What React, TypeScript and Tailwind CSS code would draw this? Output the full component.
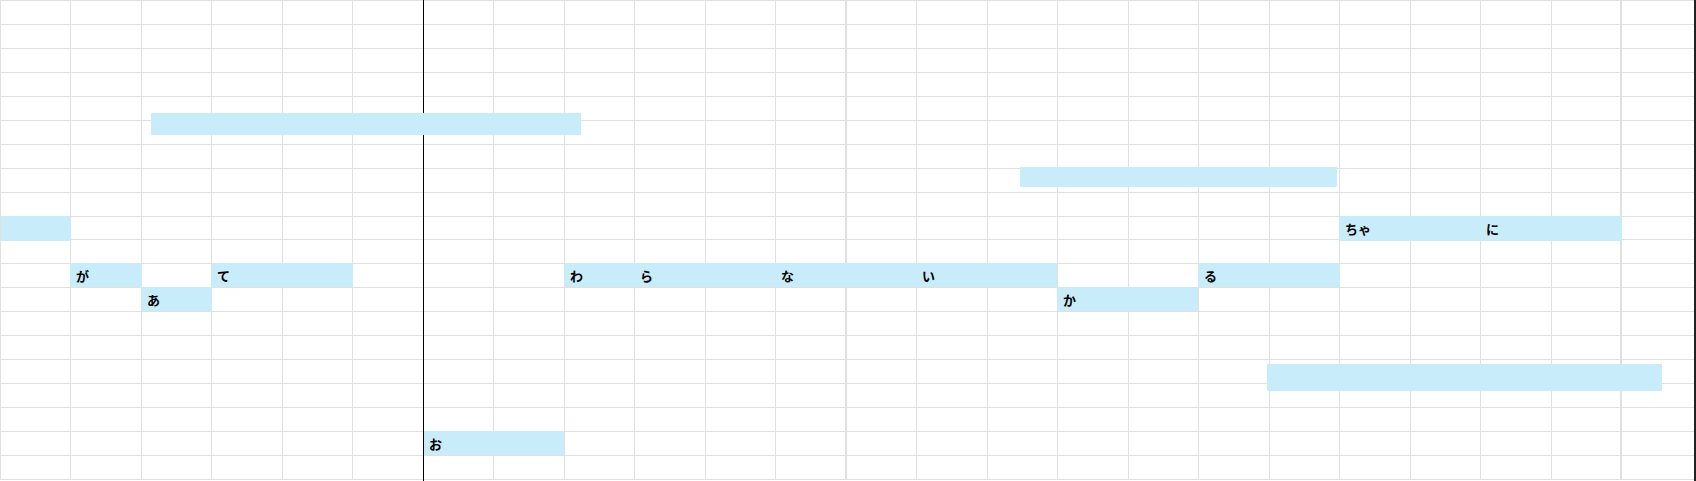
import React from "react";

const colW = (i: number) =>
  i === 23 ? "w-[73px]" : i % 2 === 0 ? "w-[70px]" : "w-[71px]";

const rowCls = (r: number) => {
  if (r === 10) return "h-[23px]";
  if (r === 9) return "h-[24px] border-t border-b";
  if (r === 19) return "h-[25px] border-t border-b";
  return "h-[24px] border-t";
};

type Note = { cls: string; text?: string };

const lyricNotes: Note[] = [
  { cls: "left-[1px] top-[216px] w-[70px] h-[25px]" },
  { cls: "left-[70px] top-[263px] w-[72px] h-[24px]", text: "が" },
  { cls: "left-[141px] top-[287px] w-[71px] h-[24px]", text: "あ" },
  { cls: "left-[211px] top-[263px] w-[142px] h-[24px]", text: "て" },
  { cls: "left-[564px] top-[263px] w-[70px] h-[24px]", text: "わ" },
  { cls: "left-[634px] top-[263px] w-[141px] h-[24px]", text: "ら" },
  { cls: "left-[775px] top-[263px] w-[141px] h-[24px]", text: "な" },
  { cls: "left-[916px] top-[263px] w-[141px] h-[24px]", text: "い" },
  { cls: "left-[1057px] top-[287px] w-[141px] h-[24px]", text: "か" },
  { cls: "left-[1198px] top-[263px] w-[142px] h-[24px]", text: "る" },
  { cls: "left-[1339px] top-[216px] w-[141px] h-[25px]", text: "ちゃ" },
  { cls: "left-[1480px] top-[216px] w-[142px] h-[25px]", text: "に" },
  { cls: "left-[423px] top-[431px] w-[141px] h-[24px]", text: "お" },
];

const bars: string[] = [
  "left-[151px] top-[113px] w-[430px] h-[22px]",
  "left-[1020px] top-[167px] w-[317px] h-[20px]",
  "left-[1267px] top-[364px] w-[395px] h-[27px]",
];

export default function App() {
  const rows = Array.from({ length: 20 }, (_, r) => r);
  const cols = Array.from({ length: 24 }, (_, c) => c);
  return (
    <div className="relative w-[1696px] h-[481px] bg-white overflow-hidden flex font-['Noto_Sans_CJK_JP',sans-serif]">
      <div className="flex flex-col w-[1694px] shrink-0">
        {rows.map((r) => (
          <div key={r} className={`flex shrink-0 border-[#e0e0e0] ${rowCls(r)}`}>
            {cols.map((c) => (
              <div
                key={c}
                className={`shrink-0 h-full border-l border-[#e0e0e0] ${colW(c)} ${
                  c === 11 || c === 22 ? "border-r" : ""
                }`}
              />
            ))}
          </div>
        ))}
      </div>
      <div className="w-[2px] h-[481px] bg-[#222222] shrink-0" />

      {lyricNotes.map((n, i) => (
        <div
          key={i}
          className={`absolute bg-[#c9ecfa] flex items-center pl-[6px] text-[13px] font-bold text-black leading-none ${n.cls}`}
        >
          {n.text}
        </div>
      ))}

      <div className="absolute left-[423px] top-0 w-px h-[481px] bg-black" />

      {bars.map((b, i) => (
        <div key={i} className={`absolute bg-[#c9ecfa] ${b}`} />
      ))}
    </div>
  );
}
